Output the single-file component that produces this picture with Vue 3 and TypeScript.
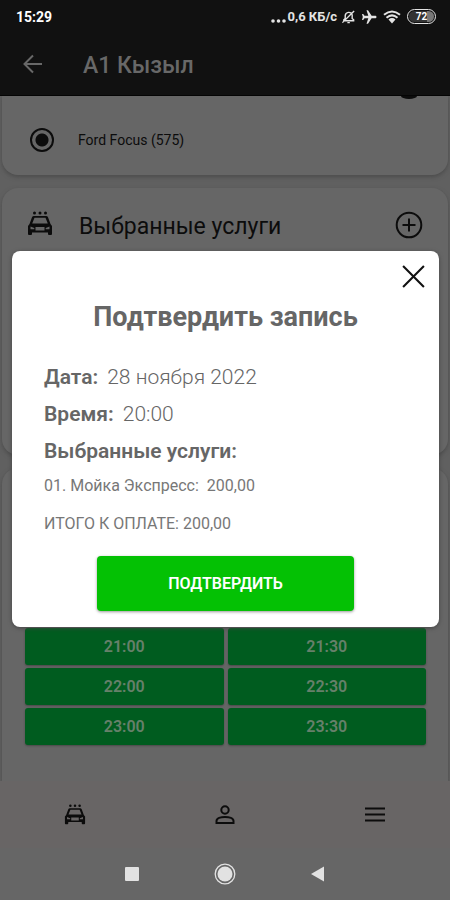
<script setup lang="ts">
import { ref } from 'vue'

interface Service {
  code: string
  name: string
  price: string
}

const car = ref('ford-focus')
const dialogOpen = ref(true)
const slots: string[] = ['21:00', '21:30', '22:00', '22:30', '23:00', '23:30']
const services: Service[] = [{ code: '01', name: 'Мойка Экспресс', price: '200,00' }]
const total = '200,00'
</script>

<template>
  <div class="app">
    <div class="status">
      <span class="clock">15:29</span>
      <div class="indicators">
        <svg class="dots" viewBox="0 0 15 16" aria-hidden="true">
          <circle cx="2" cy="12" r="1.8" /><circle cx="7.5" cy="12" r="1.8" /><circle cx="13" cy="12" r="1.8" />
        </svg>
        <span class="speed">0,6 КБ/с</span>
        <svg class="bell" viewBox="0 0 16 16" aria-hidden="true">
          <path d="M3 12V11L4.5 9.5V6.5a3.8 3.8 0 0 1 7.4-.8V9.5L13.5 11v1zM6.8 14h2.6M1.5 14 14 1.5" />
        </svg>
        <svg class="plane" viewBox="0 0 16 16" aria-hidden="true">
          <path d="M15.5 8c0-.8-.7-1.3-1.5-1.3h-3.400L7 1.200H5.500L7.300 6.700H3.500L2.200 5H1l.8 3L1 11h1.200l1.300-1.700h3.800L5.500 14.800H7l3.600-5.500H14c.8 0 1.500-.5 1.500-1.300z" />
        </svg>
        <svg class="wifi" viewBox="0 0 18 14" aria-hidden="true">
          <path class="wave" d="M1 4.800Q9-1.800 17 4.800M3.500 7.700Q9 3 14.500 7.700" />
          <path class="core" d="M5.500 9.500Q9 6.600 12.500 9.500L9 13.500z" />
        </svg>
        <span class="battery"><span class="charge">72</span></span>
      </div>
    </div>

    <header class="bar">
      <button class="icon-button" type="button" aria-label="Назад">
        <svg class="back" viewBox="0 0 20 20" aria-hidden="true"><path d="M19 10H2M10 1.500 1.500 10 10 18.500" /></svg>
      </button>
      <h1 class="place">А1 Кызыл</h1>
    </header>

    <main class="content">
      <section class="card cars">
        <span class="scrolled-icon"></span>
        <label class="car">
          <input v-model="car" class="radio" type="radio" name="car" value="ford-focus" />
          <span>Ford Focus (575)</span>
        </label>
      </section>

      <section class="card chosen">
        <svg class="wash" viewBox="0 0 26 25" aria-hidden="true">
          <circle cx="7.500" cy="2" r="1.500" /><circle cx="13" cy="2" r="1.500" /><circle cx="18.500" cy="2" r="1.500" />
          <path fill-rule="evenodd" d="M7 5h12q1.500 0 2 1.300L23.500 13 25 15v8q0 1-1 1h-2q-1 0-1-1v-1.500H5V23q0 1-1 1H2q-1 0-1-1v-8l1.500-2L5 6.300Q5.500 5 7 5zm.5 1.800L5.200 12.500h15.600L18.500 6.800zM3.500 15.500v2.800h3.800V17zM22.500 15.500 18.700 17v1.300h3.800zM8.500 16v3.500h9V16z" />
        </svg>
        <h2 class="chosen-title">Выбранные услуги</h2>
        <button class="icon-button" type="button" aria-label="Добавить услугу">
          <svg class="plus" viewBox="0 0 28 28" aria-hidden="true"><circle cx="14" cy="14" r="12.300" /><path d="M14 7.500v13M7.500 14h13" /></svg>
        </button>
      </section>

      <section class="card schedule">
        <button v-for="slot in slots" :key="slot" class="slot" type="button">{{ slot }}</button>
      </section>
    </main>

    <nav class="tabs">
      <button class="icon-button" type="button" aria-label="Мойки">
        <svg class="tab-wash" viewBox="0 0 26 25" aria-hidden="true">
          <circle cx="7.500" cy="2" r="1.500" /><circle cx="13" cy="2" r="1.500" /><circle cx="18.500" cy="2" r="1.500" />
          <path fill-rule="evenodd" d="M7 5h12q1.500 0 2 1.300L23.500 13 25 15v8q0 1-1 1h-2q-1 0-1-1v-1.500H5V23q0 1-1 1H2q-1 0-1-1v-8l1.500-2L5 6.300Q5.500 5 7 5zm.5 1.800L5.200 12.500h15.600L18.500 6.800zM3.500 15.500v2.800h3.800V17zM22.500 15.500 18.700 17v1.300h3.800zM8.500 16v3.500h9V16z" />
        </svg>
      </button>
      <button class="icon-button" type="button" aria-label="Профиль">
        <svg class="line-icon" viewBox="0 0 22 22" aria-hidden="true"><circle cx="11" cy="6" r="3.700" /><path d="M2.500 19v-2c0-5.500 17-5.500 17 0v2z" /></svg>
      </button>
      <button class="icon-button" type="button" aria-label="Меню">
        <svg class="line-icon" viewBox="0 0 22 22" aria-hidden="true"><path d="M1 4.500h20M1 10.500h20M1 16.500h20" /></svg>
      </button>
    </nav>

    <div class="system">
      <button class="icon-button" type="button" aria-label="Недавние">
        <svg class="sys-icon" viewBox="0 0 22 22" aria-hidden="true"><rect x="4" y="4" width="14" height="14" rx="1" /></svg>
      </button>
      <button class="icon-button" type="button" aria-label="Домой">
        <svg class="sys-icon" viewBox="0 0 22 22" aria-hidden="true"><circle cx="11" cy="11" r="7.500" /><circle class="ring" cx="11" cy="11" r="9.800" /></svg>
      </button>
      <button class="icon-button" type="button" aria-label="Назад в системе">
        <svg class="sys-icon" viewBox="0 0 22 22" aria-hidden="true"><path d="M4 11 17 3.500v15z" /></svg>
      </button>
    </div>

    <div v-if="dialogOpen" class="overlay">
      <div class="dialog" role="dialog" aria-modal="true" aria-labelledby="confirm-title">
        <div class="dialog-top">
          <button class="icon-button" type="button" aria-label="Закрыть" @click="dialogOpen = false">
            <svg class="close" viewBox="0 0 24 24" aria-hidden="true"><path d="M2 2 22 22M22 2 2 22" /></svg>
          </button>
        </div>
        <h2 id="confirm-title" class="dialog-title">Подтвердить запись</h2>
        <div class="details">
          <p class="detail"><b>Дата:</b><span>28 ноября 2022</span></p>
          <p class="detail"><b>Время:</b><span>20:00</span></p>
          <p class="detail"><b>Выбранные услуги:</b></p>
          <p v-for="service in services" :key="service.code" class="service">
            <span>{{ service.code }}. {{ service.name }}:</span><span>{{ service.price }}</span>
          </p>
          <p class="total">ИТОГО К ОПЛАТЕ: {{ total }}</p>
        </div>
        <button class="confirm" type="button" @click="dialogOpen = false">ПОДТВЕРДИТЬ</button>
      </div>
    </div>
  </div>
</template>

<style>
body {
  background: #666;
}
</style>

<style scoped>
.app {
  position: relative;
  display: flex;
  flex-direction: column;
  min-height: 100vh;
  background: #606060;
  color: #0c0c0c;
  font-family: Roboto, "Liberation Sans", sans-serif;
}
h1, h2, p {
  margin: 0;
}
button {
  font-family: inherit;
}
.icon-button {
  display: flex;
  align-items: center;
  justify-content: center;
  padding: 0;
  border: 0;
  background: none;
  color: inherit;
  cursor: pointer;
}
svg {
  display: block;
  fill: currentColor;
}

.status {
  display: flex;
  align-items: center;
  justify-content: space-between;
  height: 33px;
  padding: 0 14px 0 16px;
  background: #111;
  color: #e4e4e4;
}
.clock {
  color: #fff;
  font-size: 14px;
  font-weight: 700;
}
.indicators {
  display: flex;
  align-items: center;
}
.dots {
  width: 15px;
  height: 16px;
  margin-right: 2px;
}
.speed {
  margin-right: 4px;
  font-size: 13px;
  font-weight: 700;
}
.bell {
  width: 15px;
  height: 16px;
  margin-right: 5px;
  fill: none;
  stroke: currentColor;
  stroke-width: 1.5;
}
.plane {
  width: 16px;
  height: 16px;
  margin-right: 6px;
}
.wifi {
  width: 18px;
  height: 14px;
  margin-right: 6px;
}
.wave {
  fill: none;
  stroke: currentColor;
  stroke-width: 2;
}
.battery {
  display: flex;
  box-sizing: border-box;
  width: 29px;
  height: 15px;
  padding: 1px;
  border: 1px solid #e4e4e4;
  border-radius: 8px;
}
.charge {
  flex: 1;
  border-radius: 6px;
  background: linear-gradient(to right, #333 72%, #777 72%);
  color: #fff;
  font-size: 10px;
  font-weight: 700;
  line-height: 11px;
  text-align: center;
}

.bar {
  display: flex;
  align-items: center;
  gap: 40px;
  height: 62px;
  padding: 0 23px;
  border-bottom: 1px solid #050505;
  background: #111;
  color: #686868;
}
.back {
  width: 20px;
  height: 20px;
  fill: none;
  stroke: currentColor;
  stroke-width: 2;
}
.place {
  padding-top: 3px;
  font-size: 23px;
  font-weight: 500;
}

.content {
  display: flex;
  flex: 1;
  flex-direction: column;
  gap: 13px;
  padding: 0 2px;
  overflow: hidden;
}
.card {
  border-radius: 16px;
  background: #666;
  box-shadow: 0 2px 4px #4c4c4c;
}
.cars {
  display: flex;
  flex-direction: column;
  align-items: stretch;
  height: 79px;
  border-radius: 0 0 16px 16px;
}
.scrolled-icon {
  align-self: flex-end;
  width: 16px;
  height: 3px;
  margin-right: 31px;
  border-radius: 0 0 50% 50% / 0 0 100% 100%;
  background: #0c0c0c;
}
.car {
  display: flex;
  align-items: center;
  gap: 24px;
  padding: 29px 28px 0;
  font-size: 14px;
}
.radio {
  width: 24px;
  height: 24px;
  margin: 0;
  appearance: none;
  border: 2px solid #0c0c0c;
  border-radius: 50%;
}
.radio:checked {
  background: radial-gradient(circle, #0c0c0c 6px, transparent 7px);
}
.chosen {
  display: flex;
  align-items: flex-start;
  box-sizing: border-box;
  height: 267px;
  padding: 23px 25px;
}
.wash {
  width: 26px;
  height: 25px;
  margin-right: 26px;
}
.chosen-title {
  flex: 1;
  font-size: 23px;
  font-weight: 400;
  line-height: 32px;
}
.plus {
  width: 28px;
  height: 28px;
  fill: none;
  stroke: currentColor;
  stroke-width: 2;
}
.schedule {
  display: grid;
  flex: 1;
  grid-template-columns: 1fr 1fr;
  grid-auto-rows: 37px;
  align-content: end;
  gap: 3px 4px;
  padding: 0 22px 36px 23px;
  border-radius: 16px 16px 0 0;
}
.slot {
  padding: 0;
  border: 0;
  border-radius: 3px;
  background: #005c1f;
  box-shadow: 0 1px 2px #484848;
  color: #66806a;
  font-size: 16px;
  font-weight: 600;
}

.tabs {
  display: grid;
  grid-template-columns: repeat(3, 1fr);
  height: 67px;
  background: #686565;
}
.tab-wash {
  width: 22px;
  height: 21px;
}
.line-icon {
  width: 22px;
  height: 22px;
  fill: none;
  stroke: currentColor;
  stroke-width: 2;
}
.system {
  display: flex;
  align-items: center;
  justify-content: center;
  gap: 71px;
  height: 52px;
  background: #666;
  color: #e2e2e2;
}
.sys-icon {
  width: 22px;
  height: 22px;
}
.ring {
  fill: none;
  stroke: currentColor;
  stroke-width: 1.3;
}

.overlay {
  position: absolute;
  inset: 0;
  display: flex;
  align-items: center;
  padding: 0 11px 22px 12px;
}
.dialog {
  flex: 1;
  padding: 13px 13px 16px;
  border-radius: 8px;
  background: #fff;
  box-shadow: 0 1px 4px #444;
  color: #666;
}
.dialog-top {
  display: flex;
  justify-content: flex-end;
  color: #111;
}
.close {
  width: 25px;
  height: 25px;
  fill: none;
  stroke: currentColor;
  stroke-width: 2;
}
.dialog-title {
  padding-top: 12px;
  font-size: 27px;
  font-weight: 700;
  line-height: 32px;
  text-align: center;
}
.details {
  padding: 26px 19px 0;
}
.detail {
  display: flex;
  gap: 9px;
  font-size: 21px;
  line-height: 37px;
}
.detail b {
  font-weight: 600;
}
.detail span {
  font-weight: 300;
}
.service,
.total {
  display: flex;
  gap: 8px;
  color: #777;
  font-size: 16px;
  font-weight: 400;
  line-height: 32px;
}
.total {
  padding-top: 6px;
}
.confirm {
  display: block;
  width: 64%;
  height: 55px;
  margin: 16px auto 0;
  padding: 0;
  border: 0;
  border-radius: 4px;
  background: #04c104;
  box-shadow: 0 1px 3px #999;
  color: #fff;
  font-size: 16px;
  font-weight: 600;
}
</style>
